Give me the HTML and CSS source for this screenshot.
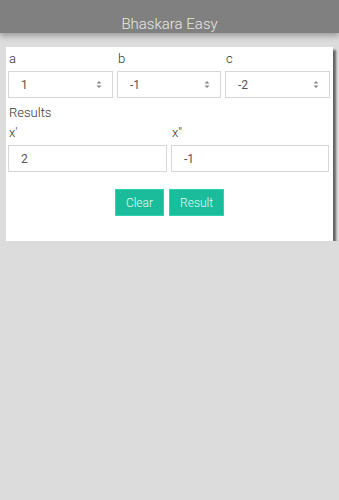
FILE: index.html
```html
<!DOCTYPE html>
<html lang="en">
<head>
    <meta charset="UTF-8">
    <meta name="viewport" content="width=device-width, initial-scale=1.0">
    <title>Bhaskara Easy</title>
    <link rel="stylesheet" href="styles.css">
</head>
<body>
    <header class="app-bar">Bhaskara Easy</header>

    <div class="card">
        <div class="coef-row">
            <div class="coef">
                <label class="field-label">a</label>
                <div class="spin-box">
                    <input type="text" class="spin-input" value="1">
                    <svg class="spin-arrows" width="6" height="9" viewBox="0 0 6 9"><path d="M0.5 3.5 L3 1 L5.5 3.5 Z M0.5 5.5 L3 8 L5.5 5.5 Z" fill="#888"/></svg>
                </div>
            </div>
            <div class="coef">
                <label class="field-label">b</label>
                <div class="spin-box">
                    <input type="text" class="spin-input" value="-1">
                    <svg class="spin-arrows" width="6" height="9" viewBox="0 0 6 9"><path d="M0.5 3.5 L3 1 L5.5 3.5 Z M0.5 5.5 L3 8 L5.5 5.5 Z" fill="#888"/></svg>
                </div>
            </div>
            <div class="coef">
                <label class="field-label">c</label>
                <div class="spin-box">
                    <input type="text" class="spin-input" value="-2">
                    <svg class="spin-arrows" width="6" height="9" viewBox="0 0 6 9"><path d="M0.5 3.5 L3 1 L5.5 3.5 Z M0.5 5.5 L3 8 L5.5 5.5 Z" fill="#888"/></svg>
                </div>
            </div>
        </div>

        <div class="results-title">Results</div>

        <div class="result-row">
            <div class="result">
                <label class="field-label">x'</label>
                <input type="text" class="result-input" value="2" readonly>
            </div>
            <div class="result">
                <label class="field-label">x"</label>
                <input type="text" class="result-input" value="-1" readonly>
            </div>
        </div>

        <div class="actions">
            <button class="btn">Clear</button>
            <button class="btn">Result</button>
        </div>
    </div>
</body>
</html>
```

FILE: styles.css
```css
body {
    margin: 0;
    background-color: #dcdcdc;
    font-family: Roboto, "Liberation Sans", sans-serif;
    color: #333;
}
.app-bar {
    height: 33px;
    box-sizing: border-box;
    padding-top: 14px;
    background-color: #808080;
    color: #e8e8e8;
    font-size: 15px;
    font-weight: 300;
    line-height: 20px;
    text-align: center;
    box-shadow: 0 3px 6px rgba(0,0,0,0.3);
}
.card {
    margin: 14px 0 0 6px;
    width: 327px;
    box-sizing: border-box;
    padding: 4px 3px 25px 2px;
    background-color: #fff;
    box-shadow: 3px 3px 2px rgba(0,0,0,0.55);
}
.field-label {
    display: block;
    padding-left: 1px;
    font-size: 13px;
    font-weight: 300;
    line-height: 16px;
    margin-bottom: 4px;
}
.coef-row {
    display: grid;
    grid-template-columns: 105px 104px 105px;
    gap: 4px;
}
.spin-box {
    display: flex;
    align-items: center;
    height: 27px;
    border: 1px solid #d6d6d6;
    box-sizing: border-box;
    padding: 0 10px 0 12px;
}
.spin-input {
    flex-grow: 1;
    min-width: 0;
    border: none;
    padding: 0;
    font-family: inherit;
    font-size: 12px;
    color: #555;
    outline: none;
}
.spin-arrows {
    flex-shrink: 0;
}
.results-title {
    font-size: 13px;
    font-weight: 300;
    line-height: 16px;
    padding-left: 1px;
    margin-top: 7px;
}
.result-row {
    display: grid;
    grid-template-columns: 159px 158px;
    gap: 4px;
    margin-top: 4px;
}
.result-input {
    display: block;
    width: 100%;
    height: 27px;
    box-sizing: border-box;
    border: 1px solid #d6d6d6;
    padding: 0 12px;
    font-family: inherit;
    font-size: 12px;
    color: #555;
    outline: none;
}
.actions {
    display: flex;
    justify-content: center;
    gap: 5px;
    margin-top: 17px;
    padding-left: 1px;
}
.btn {
    height: 27px;
    padding: 0 10px;
    border: 1px solid #2dd4b0;
    background-color: #1abc9c;
    color: #e8f8f4;
    font-family: inherit;
    font-size: 12px;
    font-weight: 300;
    cursor: pointer;
}
```
